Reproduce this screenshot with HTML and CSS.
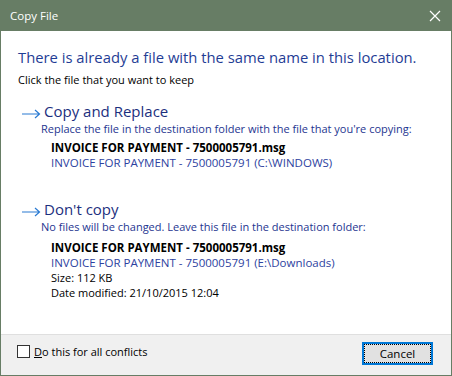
FILE: index.html
```html
<!DOCTYPE html>
<html lang="en">
<head>
  <meta charset="UTF-8">
  <title>Copy File</title>
  <link rel="stylesheet" href="styles.css">
</head>
<body>
  <div class="window">
    <div class="titlebar">
      <span class="title">Copy File</span>
      <svg class="close" width="12" height="12" viewBox="0 0 12 12">
        <path d="M1 1L11 11M11 1L1 11" stroke="#fff" stroke-width="1.2"/>
      </svg>
    </div>

    <div class="content">
      <div class="instruction">There is already a file with the same name in this location.</div>
      <div class="hint">Click the file that you want to keep</div>

      <div class="option first">
        <div class="option-head">
          <svg class="arrow" width="19" height="10" viewBox="0 0 19 10">
            <path d="M0 5H17.5M13 1L17.5 5L13 9" fill="none" stroke="#2a7ad2" stroke-width="1.2"/>
          </svg>
          <span class="option-title">Copy and Replace</span>
        </div>
        <div class="option-desc">Replace the file in the destination folder with the file that you're copying:</div>
        <div class="file">
          <div class="file-name">INVOICE FOR PAYMENT - 7500005791.msg</div>
          <div class="file-path">INVOICE FOR PAYMENT - 7500005791 (C:\WINDOWS)</div>
        </div>
      </div>

      <div class="option second">
        <div class="option-head">
          <svg class="arrow" width="19" height="10" viewBox="0 0 19 10">
            <path d="M0 5H17.5M13 1L17.5 5L13 9" fill="none" stroke="#2a7ad2" stroke-width="1.2"/>
          </svg>
          <span class="option-title">Don't copy</span>
        </div>
        <div class="option-desc">No files will be changed. Leave this file in the destination folder:</div>
        <div class="file">
          <div class="file-name">INVOICE FOR PAYMENT - 7500005791.msg</div>
          <div class="file-path">INVOICE FOR PAYMENT - 7500005791 (E:\Downloads)</div>
          <div class="file-meta">Size: 112 KB</div>
          <div class="file-meta">Date modified: 21/10/2015 12:04</div>
        </div>
      </div>
    </div>

    <div class="footer">
      <label class="check">
        <span class="box"></span>
        <span><u>D</u>o this for all conflicts</span>
      </label>
      <button class="btn">Cancel</button>
    </div>
  </div>
</body>
</html>
```

FILE: styles.css
```css
html, body {
  margin: 0;
  padding: 0;
  background: #fff;
}

body {
  font-family: 'Open Sans', 'Noto Sans', sans-serif;
  font-size: 11px;
  color: #000;
}

.window {
  width: 452px;
  height: 376px;
  box-sizing: border-box;
  border: 1px solid #677d65;
  border-top: none;
  display: flex;
  flex-direction: column;
}

.titlebar {
  height: 31px;
  background: #677d65;
  color: #fff;
  display: flex;
  align-items: center;
  justify-content: space-between;
  padding: 0 10px 0 9px;
  flex-shrink: 0;
}

.title {
  font-size: 11.5px;
}

.content {
  flex: 1;
  background: #fff;
  padding: 16px 17px 0;
}

.instruction {
  font-size: 14.8px;
  line-height: 20px;
  color: #1f3d95;
}

.hint {
  line-height: 15px;
  margin-top: 5px;
}

.option.first {
  margin-top: 15px;
}

.option.second {
  margin-top: 30px;
}

.option-head {
  display: flex;
  align-items: flex-start;
  gap: 3px;
  margin-left: 4px;
}

.arrow {
  margin-top: 7px;
}

.option-title {
  font-size: 15px;
  line-height: 18px;
  color: #1c2f7e;
}

.option-desc {
  margin: 1px 0 0 23px;
  line-height: 15px;
  color: #1e3590;
}

.file {
  margin: 4px 0 0 33px;
  font-size: 11.5px;
  line-height: 15px;
}

.second .file {
  margin-top: 6px;
}

.file-name {
  font-weight: 700;
}

.file-path {
  color: #2d42a0;
}

.file-meta {
  font-size: 11px;
}

.footer {
  height: 40px;
  flex-shrink: 0;
  background: #f0f0f0;
  border-top: 1px solid #dfdfdf;
  display: flex;
  align-items: flex-start;
  justify-content: space-between;
  padding: 0 18px 0 16px;
}

.check {
  display: flex;
  align-items: center;
  gap: 4px;
  margin-top: 9px;
}

.box {
  width: 11px;
  height: 11px;
  border: 1px solid #333;
  background: #fff;
}

.btn {
  margin-top: 7px;
  width: 71px;
  height: 23px;
  box-sizing: border-box;
  border: 2px solid #0078d7;
  background: #e1e1e1;
  font-family: inherit;
  font-size: 11.5px;
  line-height: 17px;
  color: #000;
  outline: 1px dotted #000;
  outline-offset: -3px;
  padding: 0 0 1px;
}
```
